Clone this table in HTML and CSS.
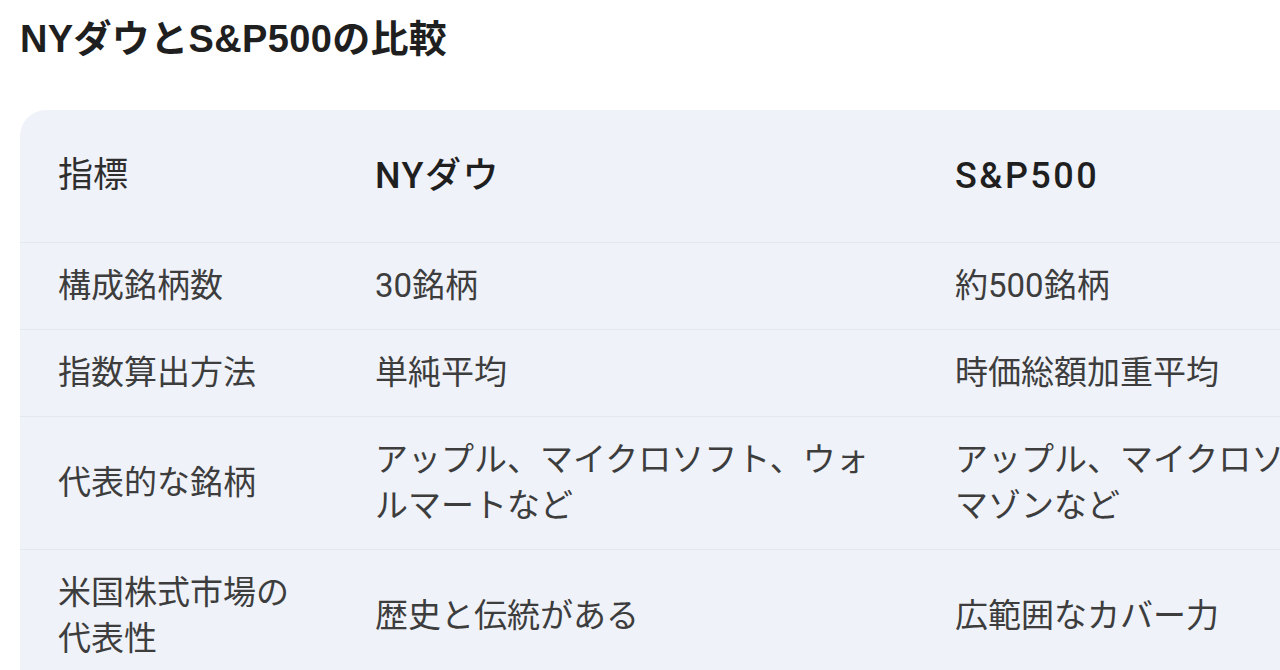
FILE: index.html
```html
<!DOCTYPE html>
<html lang="ja">
<head>
<meta charset="utf-8">
<title>NYダウとS&amp;P500の比較</title>
<link rel="stylesheet" href="styles.css">
</head>
<body>
<main class="page">
  <h1 class="title">NYダウとS&amp;P500の比較</h1>
  <div class="table-card">
    <table class="compare">
      <colgroup>
        <col class="c1">
        <col class="c2">
        <col class="c3">
      </colgroup>
      <thead>
        <tr>
          <th class="label-head">指標</th>
          <th class="name-head">NYダウ</th>
          <th class="name-head name-wide">S&amp;P500</th>
        </tr>
      </thead>
      <tbody>
        <tr>
          <td>構成銘柄数</td>
          <td>30銘柄</td>
          <td>約500銘柄</td>
        </tr>
        <tr>
          <td>指数算出方法</td>
          <td>単純平均</td>
          <td>時価総額加重平均</td>
        </tr>
        <tr>
          <td>代表的な銘柄</td>
          <td>アップル、マイクロソフト、ウォルマートなど</td>
          <td>アップル、マイクロソフト、アマゾンなど</td>
        </tr>
        <tr>
          <td>米国株式市場の代表性</td>
          <td>歴史と伝統がある</td>
          <td>広範囲なカバー力</td>
        </tr>
      </tbody>
    </table>
  </div>
</main>
</body>
</html>
```

FILE: styles.css
```css
html, body {
  margin: 0;
  padding: 0;
  background: #ffffff;
  overflow: hidden;
}

body {
  width: 1280px;
  height: 670px;
  font-family: Roboto, "Noto Sans CJK JP", sans-serif;
  color: #3c3c3c;
}

.page {
  padding: 17px 0 0 20px;
}

.title {
  margin: 0;
  font-family: "Liberation Sans", "Noto Sans CJK JP", sans-serif;
  font-size: 38px;
  line-height: 44px;
  font-weight: 700;
  letter-spacing: 0.35px;
  color: #1f1f1f;
  white-space: nowrap;
}

.table-card {
  margin-top: 49px;
  width: 1453px;
  background: #eff2f9;
  border-radius: 26px 0 0 0;
  overflow: hidden;
}

.compare {
  border-collapse: collapse;
  table-layout: fixed;
  width: 1453px;
}

.c1 { width: 317px; }
.c2 { width: 580px; }
.c3 { width: 556px; }

.compare th,
.compare td {
  text-align: left;
  vertical-align: middle;
  padding: 20px 38px;
  font-size: 33px;
  line-height: 46px;
  border-bottom: 1px solid #e2e7f0;
}

.compare th {
  padding-top: 43px;
  padding-bottom: 43px;
  font-size: 36px;
  font-weight: 500;
  color: #1f1f1f;
}

.compare th.label-head {
  font-size: 35px;
  font-weight: 400;
  color: #2e2e2e;
}

.compare th.name-head {
  letter-spacing: 1.5px;
}

.compare th.name-wide {
  letter-spacing: 2.5px;
}

.compare td {
  font-weight: 400;
  color: #3d3d3d;
}
```
